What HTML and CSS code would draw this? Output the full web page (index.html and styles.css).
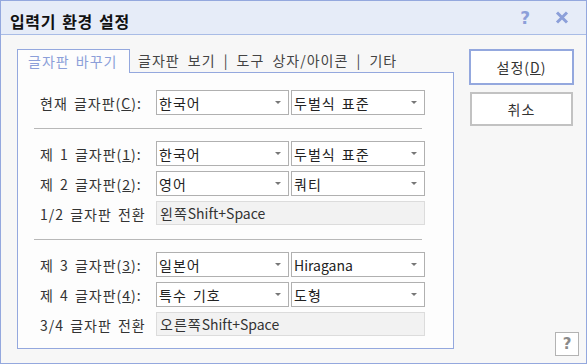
FILE: index.html
```html
<!DOCTYPE html>
<html>
<head>
<title>입력기 환경 설정</title>
<meta charset="utf-8">
<link rel="stylesheet" href="styles.css">
</head>
<body>

<div class="dialog">
    <div class="titlebar">
        <span class="title">입력기 환경 설정</span>
        <span class="tb-help">?</span>
        <svg class="tb-close" width="14" height="13" viewBox="0 0 14 13">
            <path d="M2 1.5 L12 11.5 M12 1.5 L2 11.5" stroke="#8c9fd9" stroke-width="3"/>
        </svg>
    </div>

    <div class="content">
        <div class="tabs-area">
            <div class="tabs">
                <div class="tab active">글자판 바꾸기</div>
                <div class="tab rest">글자판 보기 | 도구 상자/아이콘 | 기타</div>
            </div>

            <div class="panel">
                <div class="row">
                    <label>현재 글자판(<u>C</u>):</label>
                    <div class="combo">한국어</div>
                    <div class="combo">두벌식 표준</div>
                </div>

                <hr>

                <div class="row">
                    <label>제 1 글자판(<u>1</u>):</label>
                    <div class="combo">한국어</div>
                    <div class="combo">두벌식 표준</div>
                </div>
                <div class="row">
                    <label>제 2 글자판(<u>2</u>):</label>
                    <div class="combo">영어</div>
                    <div class="combo">쿼티</div>
                </div>
                <div class="row">
                    <label>1/2 글자판 전환</label>
                    <div class="field">왼쪽<span class="en">Shift+Space</span></div>
                </div>

                <hr>

                <div class="row">
                    <label>제 3 글자판(<u>3</u>):</label>
                    <div class="combo">일본어</div>
                    <div class="combo"><span class="en">Hiragana</span></div>
                </div>
                <div class="row">
                    <label>제 4 글자판(<u>4</u>):</label>
                    <div class="combo">특수 기호</div>
                    <div class="combo">도형</div>
                </div>
                <div class="row">
                    <label>3/4 글자판 전환</label>
                    <div class="field">오른쪽<span class="en">Shift+Space</span></div>
                </div>
            </div>
        </div>

        <div class="side">
            <button type="button" class="btn default">설정(<u>D</u>)</button>
            <button type="button" class="btn cancel">취소</button>
            <button type="button" class="help-btn">?</button>
        </div>
    </div>
</div>

</body>
</html>
```

FILE: styles.css
```css
body { margin: 0; font-family: "Noto Sans CJK KR", "Noto Sans", sans-serif; font-size: 14px; color: #333; word-spacing: 2px; letter-spacing: 1px; }
.en { letter-spacing: 0; }
.dialog { width: 587px; height: 364px; box-sizing: border-box; border: 1px solid #94a8de; background-color: #f7f7f7; display: flex; flex-direction: column; }

.titlebar { height: 33px; border-bottom: 1px solid #a9bce6; background-color: #e6ecf8; display: flex; align-items: center; padding: 0 17px 0 9px; }
.title { font-size: 16px; font-weight: bold; color: #111; flex: 1; padding-top: 6px; letter-spacing: 0.6px; }
.tb-help { font-size: 17px; font-weight: bold; color: #8c9fd9; margin-right: 25px; font-family: "DejaVu Sans", sans-serif; letter-spacing: 0; }
.tb-close { display: block; }

.content { flex: 1; display: flex; padding: 14px 0 0 16px; }
.tabs-area { width: 437px; display: flex; flex-direction: column; margin-bottom: 14px; }

.tabs { display: flex; height: 24px; }
.tab { box-sizing: border-box; height: 24px; line-height: 22px; white-space: nowrap; }
.tab.active { width: 113px; padding-left: 10px; border: 1px solid #94a8de; border-bottom: none; background-color: #fdfdfd; color: #8c9fd9; }
.tab.rest { flex: 1; padding-left: 8px; border-bottom: 1px solid #94a8de; color: #444; word-spacing: 4px; }

.panel { flex: 1; border: 1px solid #94a8de; border-top: none; background-color: #fdfdfd; padding: 17px 28px 0 22px; }

.row { display: grid; grid-template-columns: 114px 133px 134px; column-gap: 2px; height: 25px; margin-bottom: 5px; align-items: stretch; }
.row:last-child { margin-bottom: 0; }
label { display: flex; align-items: center; white-space: nowrap; color: #333; }

.combo { box-sizing: border-box; border: 1px solid #b0b0b0; background-color: #fff; color: #222; padding-left: 2px; display: flex; align-items: center; white-space: nowrap; overflow: hidden; }
.combo::after { content: ""; margin-left: auto; margin-right: 7px; border-left: 3px solid transparent; border-right: 3px solid transparent; border-top: 3px solid #777; }

.field { grid-column: 2 / 4; box-sizing: border-box; height: 24px; border: 1px solid #dcdcdc; background-color: #f2f2f2; color: #333; padding-left: 3px; display: flex; align-items: center; word-spacing: 0; }

hr { border: none; border-top: 1px solid #b8b8b8; margin: 13px 3px 12px -6px; height: 0; }

.side { flex: 1; display: flex; flex-direction: column; align-items: flex-start; padding: 0 7px 7px 15px; }
.btn { font-family: inherit; font-size: 14px; color: #333; background-color: #fff; cursor: pointer; word-spacing: 0; letter-spacing: 1px; }
.btn.default { width: 105px; height: 36px; border: 2px solid #94a8de; }
.btn.cancel { width: 103px; height: 34px; margin: 7px 0 0 1px; border: 2px solid #c2c2c2; }
.help-btn { margin-top: auto; align-self: flex-end; width: 24px; height: 24px; padding: 0; border: 1px solid #b3b3b3; background-color: #fff; color: #8a8a8a; font-family: "DejaVu Sans", sans-serif; font-size: 15px; font-weight: bold; letter-spacing: 0; }
```
